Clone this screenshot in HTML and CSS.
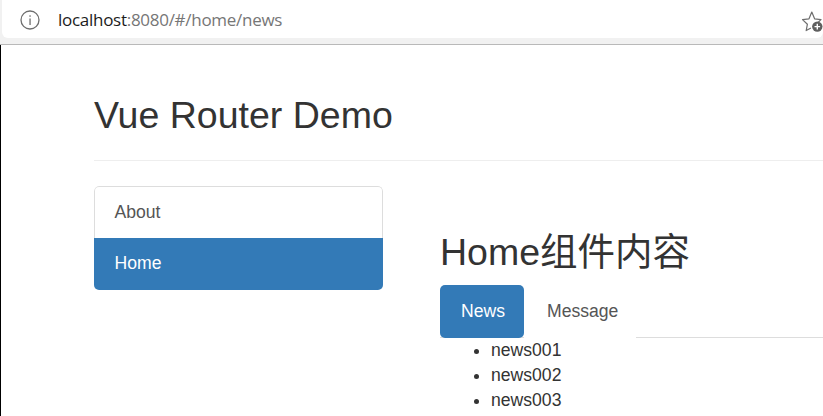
FILE: index.html
```html
<!DOCTYPE html>
<html lang="zh">
<head>
<meta charset="utf-8">
<title>Vue Router Demo</title>
<link rel="stylesheet" href="styles.css">
</head>
<body>
<header class="chrome">
  <div class="address">
    <svg class="info" width="22" height="22" viewBox="0 0 22 22" aria-hidden="true">
      <circle cx="11" cy="11" r="9" fill="none" stroke="#6e6e6e" stroke-width="1.3"/>
      <rect x="10.4" y="9.5" width="1.3" height="6.5" fill="#6e6e6e"/>
      <rect x="10.4" y="6.3" width="1.3" height="1.5" fill="#6e6e6e"/>
    </svg>
    <span class="url"><span class="host">localhost</span>:8080/#/home/news</span>
    <svg class="star" width="22" height="22" viewBox="0 0 22 22" aria-hidden="true">
      <path d="M9.5 18.2L5.2 20.6L6.4 14.2L1.5 9.6L8 8.8L10.8 2L13.6 8.8L20 9.6L17.5 12" fill="none" stroke="#6e6e6e" stroke-width="1.2" stroke-linejoin="round" stroke-linecap="round"/>
      <circle cx="16.3" cy="16.6" r="5.2" fill="#5f5f5f"/>
      <path d="M16.3 13.8v5.6M13.5 16.6h5.6" stroke="#fff" stroke-width="1.4"/>
    </svg>
  </div>
</header>
<div class="page">
  <div class="page-header"><h1>Vue Router Demo</h1></div>
  <div class="columns">
    <nav class="side">
      <a class="side-item">About</a>
      <a class="side-item active">Home</a>
    </nav>
    <main class="content">
      <h2>Home组件内容</h2>
      <div class="tabs">
        <a class="tab active">News</a>
        <a class="tab plain">Message</a>
      </div>
      <ul class="list">
        <li>news001</li>
        <li>news002</li>
        <li>news003</li>
      </ul>
    </main>
  </div>
</div>
</body>
</html>
```
FILE: styles.css
```css
* { box-sizing: border-box; }
html, body { margin: 0; height: 416px; overflow: hidden; background: #fff; }
body {
  font-family: "Liberation Sans", "Noto Sans CJK SC", sans-serif;
  font-size: 17.6px;
  color: #333;
}
.chrome {
  height: 45px;
  background: #f1f1f1;
  border-bottom: 1px solid #b9b9b9;
  padding: 0 0 6px 2px;
}
.address {
  height: 38px;
  background: #fff;
  border-radius: 0 0 6px 6px;
  display: flex;
  align-items: center;
  padding-left: 17px;
}
.info { flex: none; margin-top: 1px; }
.url {
  margin-left: 17px;
  font-family: "Open Sans", "Liberation Sans", sans-serif;
  font-size: 17px;
  letter-spacing: -0.28px;
  color: #767676;
}
.host { color: #1c1c1c; }
.star { flex: none; margin-left: auto; margin-top: 4px; }
.page {
  height: 371px;
  border-left: 1px solid #000;
  padding-left: 93px;
  overflow: hidden;
}
.page-header {
  height: 116px;
  border-bottom: 1px solid #eee;
  padding-top: 50px;
}
h1 {
  margin: 0;
  font-size: 37.5px;
  font-weight: 400;
  line-height: 40px;
}
.columns {
  display: flex;
  margin-top: 25px;
}
.side {
  flex: none;
  width: 289px;
  height: 104px;
  display: flex;
  flex-direction: column;
  border-radius: 5px;
  overflow: hidden;
}
.side-item {
  height: 52px;
  padding: 0 19.5px;
  line-height: 50px;
  color: #555;
  border: 1px solid #ddd;
  border-bottom: 0;
  border-radius: 5px 5px 0 0;
}
.side-item.active {
  padding: 0 20.5px;
  line-height: 50px;
  color: #fff;
  background: #337ab7;
  border: 0;
  border-radius: 0;
}
.content { flex: 1; margin-left: 57px; }
h2 {
  margin: 44px 0 0;
  font-size: 37.5px;
  font-weight: 400;
  line-height: 44px;
}
.tabs {
  display: flex;
  margin-top: 11px;
  height: 53px;
  border-bottom: 1px solid #ddd;
}
.tab {
  height: 53px;
  line-height: 52px;
  padding: 0 21px;
}
.tab.active {
  width: 84px;
  background: #337ab7;
  color: #fff;
  border-radius: 5px;
}
.tab.plain {
  width: 112px;
  padding: 0 23px;
  background: #fff;
  color: #555;
}
.list {
  margin: 0;
  padding: 0 0 0 51px;
  line-height: 25px;
}
```
